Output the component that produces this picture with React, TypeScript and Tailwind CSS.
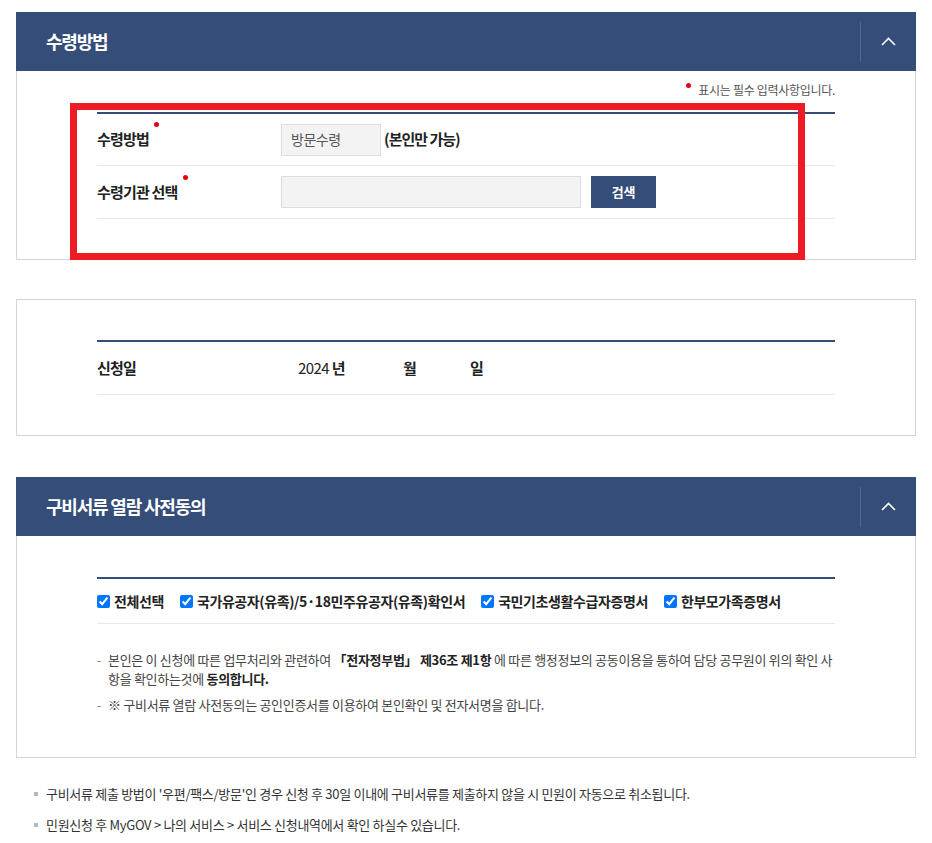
import React from "react";

const navy = "bg-[#344d79]";

function PanelHeader({ title }: { title: string }) {
  return (
    <div className={`flex h-[59px] items-center justify-between ${navy} pl-[30px]`}>
      <h2 className="text-[18px] font-bold tracking-[-1.2px] text-white">{title}</h2>
      <div className="flex h-full items-center">
        <span className="h-[40px] w-px bg-[#4e6694]" />
        <button className="flex h-full w-[55px] items-center justify-center">
          <svg width="15" height="9" viewBox="0 0 15 9" fill="none">
            <path d="M1 8 L7.5 1.5 L14 8" stroke="#fff" strokeWidth="1.6" />
          </svg>
        </button>
      </div>
    </div>
  );
}

function Req() {
  return <span className="ml-[5px] inline-block h-[5px] w-[5px] -translate-y-[6px] rounded-full bg-[#e60012] align-top" />;
}

function CheckItem({ label }: { label: string }) {
  return (
    <label className="mr-[16px] flex items-center gap-[4px]">
      <input type="checkbox" defaultChecked className="m-0 h-[13px] w-[13px]" />
      <span className="text-[14px] font-bold tracking-[-0.4px] text-[#222]">{label}</span>
    </label>
  );
}

export default function App() {
  return (
    <div className="relative min-h-[843px] bg-white pt-[12px] font-['Noto_Sans_CJK_KR',sans-serif] text-[#333]">
      <div className="mx-[16px]">
        {/* 수령방법 */}
        <section>
          <PanelHeader title="수령방법" />
          <div className="border-x border-b border-[#d5d5d5] px-[80px] pt-[9px] pb-[40px]">
            <p className="flex h-[20px] items-center justify-end text-[12px] tracking-[-0.3px] text-[#555]">
              <span className="mr-[7px] h-[5px] w-[5px] -translate-y-[5px] rounded-full bg-[#e60012]" />
              표시는 필수 입력사항입니다.
            </p>
            <div className="mt-[12px] border-t-2 border-[#344d79]">
              <div className="flex h-[52px] items-center border-b border-[#e8e8e8]">
                <div className="w-[184px] text-[15px] font-bold tracking-[-0.8px] text-[#222]">
                  수령방법
                  <Req />
                </div>
                <div className="flex h-[32px] w-[100px] items-center border border-[#dcdcdc] bg-[#f3f3f3] pl-[9px] text-[14px] tracking-[-0.5px] text-[#555]">
                  방문수령
                </div>
                <span className="ml-[3px] text-[15px] font-bold tracking-[-1px] text-[#222]">(본인만 가능)</span>
              </div>
              <div className="flex h-[53px] items-center border-b border-[#e8e8e8]">
                <div className="w-[184px] text-[15px] font-bold tracking-[-0.8px] text-[#222]">
                  수령기관 선택
                  <Req />
                </div>
                <div className="h-[32px] w-[300px] border border-[#dcdcdc] bg-[#f3f3f3]" />
                <button className={`ml-[10px] h-[32px] w-[65px] ${navy} text-[13px] font-bold tracking-[-0.3px] text-white`}>
                  검색
                </button>
              </div>
            </div>
          </div>
        </section>

        {/* 신청일 */}
        <section className="mt-[39px] border border-[#d5d5d5] px-[80px] pt-[40px] pb-[40px]">
          <div className="border-t-2 border-[#344d79]">
            <div className="flex h-[53px] items-center border-b border-[#e8e8e8] text-[15px] text-[#222]">
              <div className="w-[201px] font-bold tracking-[-0.8px]">신청일</div>
              <div className="w-[105px] tracking-[-0.6px]">
                2024 <span className="font-bold">년</span>
              </div>
              <div className="w-[67px] font-bold">월</div>
              <div className="font-bold">일</div>
            </div>
          </div>
        </section>

        {/* 구비서류 열람 사전동의 */}
        <section className="mt-[41px]">
          <PanelHeader title="구비서류 열람 사전동의" />
          <div className="border-x border-b border-[#d5d5d5] px-[80px] pt-[41px] pb-[43px]">
            <div className="border-t-2 border-[#344d79]">
              <div className="flex h-[45px] items-center border-b border-[#e8e8e8]">
                <CheckItem label="전체선택" />
                <CheckItem label="국가유공자(유족)/5·18민주유공자(유족)확인서" />
                <CheckItem label="국민기초생활수급자증명서" />
                <CheckItem label="한부모가족증명서" />
              </div>
            </div>
            <div className="mt-[26px] text-[13px] leading-[19px] tracking-[-0.3px] text-[#444]">
              <p className="flex">
                <span className="w-[11px] shrink-0 text-[#888]">-</span>
                <span>
                  본인은 이 신청에 따른 업무처리와 관련하여{" "}
                  <b className="text-[#222]">「전자정부법」 제36조 제1항</b> 에 따른 행정정보의 공동이용을 통하여 담당
                  공무원이 위의 확인 사항을 확인하는것에 <b className="text-[#222]">동의합니다.</b>
                </span>
              </p>
              <p className="mt-[7px] flex">
                <span className="w-[11px] shrink-0 text-[#888]">-</span>
                <span>※ 구비서류 열람 사전동의는 공인인증서를 이용하여 본인확인 및 전자서명을 합니다.</span>
              </p>
            </div>
          </div>
        </section>

        {/* 안내 */}
        <ul className="mt-[26px] pl-[18px] text-[13px] leading-[19px] tracking-[-0.3px] text-[#333]">
          <li className="flex items-center">
            <span className="mr-[8px] h-[4px] w-[4px] bg-[#b8b8b8]" />
            구비서류 제출 방법이 '우편/팩스/방문'인 경우 신청 후 30일 이내에 구비서류를 제출하지 않을 시 민원이 자동으로 취소됩니다.
          </li>
          <li className="mt-[12px] flex items-center">
            <span className="mr-[8px] h-[4px] w-[4px] bg-[#b8b8b8]" />
            민원신청 후 MyGOV &gt; 나의 서비스 &gt; 서비스 신청내역에서 확인 하실수 있습니다.
          </li>
        </ul>
      </div>

      {/* 강조 표시 */}
      <div className="pointer-events-none absolute top-[103px] left-[70px] h-[157px] w-[735px] border-[7px] border-[#ed1c24]" />
    </div>
  );
}
